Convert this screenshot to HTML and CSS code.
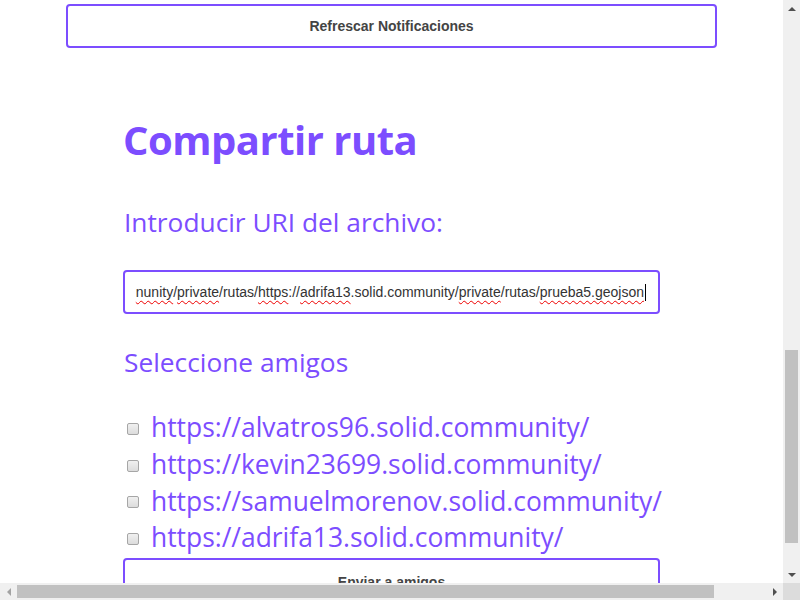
FILE: index.html
```html
<!DOCTYPE html>
<html lang="es">
<head>
<meta charset="utf-8">
<title>Compartir ruta</title>
<link rel="stylesheet" href="styles.css">
</head>
<body>
<div class="viewport">
  <main class="page">
    <button class="btn btn-top">Refrescar Notificaciones</button>
    <section class="share">
      <h1 class="title">Compartir ruta</h1>
      <h3 class="label">Introducir URI del archivo:</h3>
      <div class="uri-input"><span class="uri-text"><span class="sp">nunity</span>/<span class="sp">private</span>/rutas/<span class="sp">https</span>://<span class="sp">adrifa13</span>.solid.community/<span class="sp">private</span>/rutas/<span class="sp">prueba5.geojson</span></span><span class="caret"></span></div>
      <h3 class="label friends-label">Seleccione amigos</h3>
      <ul class="friends">
        <li><input type="checkbox" class="check"><span>https://alvatros96.solid.community/</span></li>
        <li><input type="checkbox" class="check"><span>https://kevin23699.solid.community/</span></li>
        <li><input type="checkbox" class="check"><span>https://samuelmorenov.solid.community/</span></li>
        <li><input type="checkbox" class="check"><span>https://adrifa13.solid.community/</span></li>
      </ul>
      <button class="btn btn-send">Enviar a amigos</button>
    </section>
  </main>
  <div class="vscroll">
    <span class="arrow arrow-up"></span>
    <div class="vtrack"><div class="vthumb"></div></div>
    <span class="arrow arrow-down"></span>
  </div>
  <div class="hscroll">
    <span class="arrow arrow-left"></span>
    <div class="htrack"><div class="hthumb"></div></div>
    <span class="arrow arrow-right"></span>
  </div>
  <div class="corner"></div>
</div>
</body>
</html>
```
FILE: styles.css
```css
* { box-sizing: border-box; }
html, body { margin: 0; padding: 0; }
body { background: #fff; font-family: "Open Sans", "Noto Sans", sans-serif; }

.viewport {
  width: 800px;
  height: 600px;
  display: grid;
  grid-template-columns: 783px 17px;
  grid-template-rows: 583px 17px;
  overflow: hidden;
}

.page {
  overflow: hidden;
  padding-top: 4px;
  background: #fff;
}

.btn {
  display: block;
  background: #fff;
  border: 2px solid #7c4dff;
  border-radius: 4px;
  font-family: "Liberation Sans", Arial, sans-serif;
  font-weight: bold;
  font-size: 14px;
  color: #444;
  padding: 0;
}
.btn-top {
  margin-left: 66px;
  width: 651px;
  height: 44px;
}

.share {
  margin-left: 123px;
  width: 537px;
}

.title {
  margin: 0;
  padding-top: 64px;
  font-size: 40px;
  line-height: 56px;
  font-weight: 700;
  color: #7c4dff;
  letter-spacing: -0.5px;
}

.label {
  margin: 0;
  font-weight: 400;
  font-size: 26.3px;
  line-height: 36px;
  color: #7c4dff;
  padding-left: 1px;
}
.title + .label { margin-top: 36px; }

.uri-input {
  margin-top: 30px;
  height: 44px;
  border: 2px solid #7c4dff;
  border-radius: 4px;
  display: flex;
  justify-content: flex-end;
  align-items: center;
  overflow: hidden;
  padding-right: 12px;
  font-family: "Liberation Sans", Arial, sans-serif;
  font-size: 14px;
  color: #333;
  white-space: nowrap;
}
.uri-text { flex: none; }
.sp {
  text-decoration: underline wavy #e00;
  text-decoration-thickness: 1px;
  text-underline-offset: 3px;
}
.caret {
  flex: none;
  width: 1px;
  height: 17px;
  background: #000;
  margin-left: 1px;
}

.friends-label { margin-top: 30px; }

.friends {
  list-style: none;
  margin: 29px 0 0;
  padding: 0;
}
.friends li {
  display: flex;
  align-items: center;
  height: 36.7px;
  font-size: 26.4px;
  color: #7c4dff;
}
.check {
  -webkit-appearance: none;
  appearance: none;
  flex: none;
  width: 12px;
  height: 12px;
  margin: 3px 12px 0 4px;
  border: 1px solid #a6a6a6;
  border-radius: 2px;
  background: linear-gradient(#f0f0f0, #dcdcdc);
}

.btn-send {
  width: 537px;
  height: 44px;
  margin-top: 2px;
  padding-top: 4px;
}

/* scrollbars */
.vscroll {
  background: #f0f0f0;
  display: flex;
  flex-direction: column;
  align-items: center;
}
.vtrack { flex: 1; width: 100%; padding: 0 2px; display: flex; flex-direction: column; }
.vthumb {
  margin-top: 333px;
  height: 193px;
  background: #c1c1c1;
}
.hscroll {
  background: #f0f0f0;
  display: flex;
  align-items: center;
}
.htrack { flex: 1; height: 100%; padding: 2px 0; display: flex; }
.hthumb {
  width: 697px;
  background: #c1c1c1;
}
.corner { background: #dcdcdc; }

.arrow { flex: none; width: 17px; height: 17px; display: flex; align-items: center; justify-content: center; }
.arrow::before { content: ""; width: 0; height: 0; border: 4px solid transparent; }
.arrow-up::before { border-bottom-color: #505050; border-top-width: 0; }
.arrow-down::before { border-top-color: #505050; border-bottom-width: 0; }
.arrow-left::before { border-right-color: #a3a3a3; border-left-width: 0; }
.arrow-right::before { border-left-color: #505050; border-right-width: 0; }
```
